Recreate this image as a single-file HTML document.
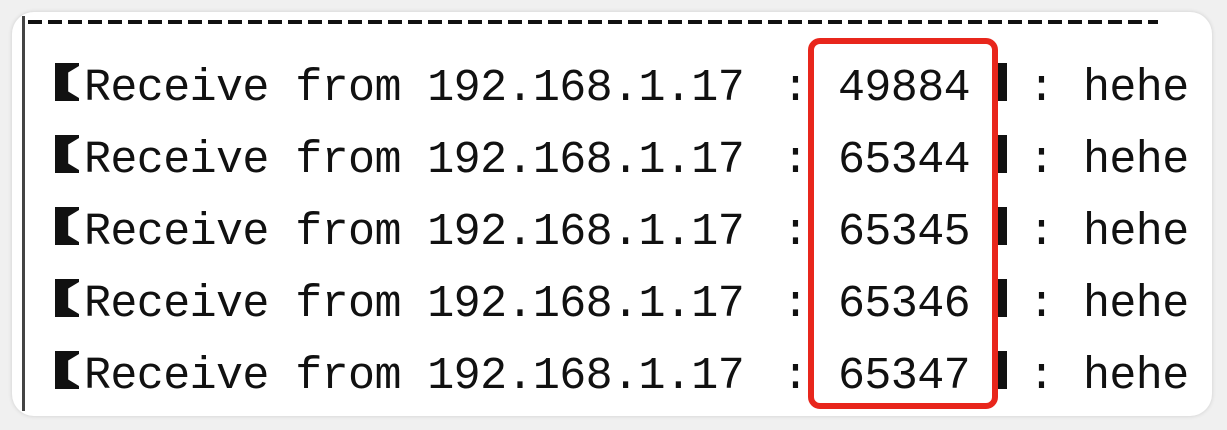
<!DOCTYPE html>
<html><head><style>
html,body{margin:0;padding:0;}
body{width:1227px;height:430px;background:#f0f0f0;position:relative;overflow:hidden;font-family:"Liberation Mono",monospace;}
.card{position:absolute;left:12px;top:12px;width:1200px;height:404px;background:#fff;border-radius:22px;box-shadow:0 0 4px rgba(0,0,0,0.15);overflow:hidden;}
.vl{position:absolute;left:22px;top:16px;width:3px;height:395px;background:#444;}
.dash{position:absolute;left:28px;top:20px;width:1130px;height:4px;background:repeating-linear-gradient(90deg,#111 0 14px,transparent 14px 20px);}
.t{position:absolute;font-size:45px;color:#111;letter-spacing:-0.6px;line-height:1;white-space:pre;}
.br{position:absolute;width:24px;height:38px;background:#111;clip-path:polygon(0 0,100% 0,100% 8%,55% 25%,55% 75%,100% 92%,100% 100%,0 100%);}
.bar{position:absolute;width:9px;height:38px;background:#111;}
.red{position:absolute;left:808px;top:38px;width:178px;height:359px;border:6px solid #e8261c;border-radius:12px;}
</style></head><body>
<div class="card"></div>
<div class="vl"></div>
<div class="dash"></div>
<div style="position:absolute;left:0;top:0">
<div class="br" style="left:55px;top:63px"></div><div class="t" style="left:84px;top:66px">Receive from 192.168.1.17</div><div class="t" style="left:782px;top:66px">:</div><div class="t" style="left:838px;top:66px">49884</div><div class="bar" style="left:998px;top:63px"></div><div class="t" style="left:1028px;top:66px">:</div><div class="t" style="left:1083px;top:66px">hehe</div>
</div>
<div style="position:absolute;left:0;top:72px">
<div class="br" style="left:55px;top:63px"></div><div class="t" style="left:84px;top:66px">Receive from 192.168.1.17</div><div class="t" style="left:782px;top:66px">:</div><div class="t" style="left:838px;top:66px">65344</div><div class="bar" style="left:998px;top:63px"></div><div class="t" style="left:1028px;top:66px">:</div><div class="t" style="left:1083px;top:66px">hehe</div>
</div>
<div style="position:absolute;left:0;top:144px">
<div class="br" style="left:55px;top:63px"></div><div class="t" style="left:84px;top:66px">Receive from 192.168.1.17</div><div class="t" style="left:782px;top:66px">:</div><div class="t" style="left:838px;top:66px">65345</div><div class="bar" style="left:998px;top:63px"></div><div class="t" style="left:1028px;top:66px">:</div><div class="t" style="left:1083px;top:66px">hehe</div>
</div>
<div style="position:absolute;left:0;top:216px">
<div class="br" style="left:55px;top:63px"></div><div class="t" style="left:84px;top:66px">Receive from 192.168.1.17</div><div class="t" style="left:782px;top:66px">:</div><div class="t" style="left:838px;top:66px">65346</div><div class="bar" style="left:998px;top:63px"></div><div class="t" style="left:1028px;top:66px">:</div><div class="t" style="left:1083px;top:66px">hehe</div>
</div>
<div style="position:absolute;left:0;top:288px">
<div class="br" style="left:55px;top:63px"></div><div class="t" style="left:84px;top:66px">Receive from 192.168.1.17</div><div class="t" style="left:782px;top:66px">:</div><div class="t" style="left:838px;top:66px">65347</div><div class="bar" style="left:998px;top:63px"></div><div class="t" style="left:1028px;top:66px">:</div><div class="t" style="left:1083px;top:66px">hehe</div>
</div>
<div class="red"></div>
</body></html>
